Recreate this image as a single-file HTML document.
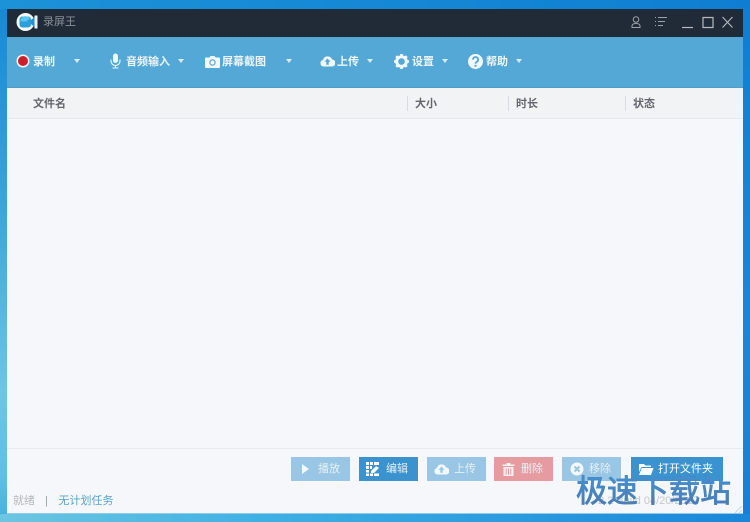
<!DOCTYPE html>
<html><head><meta charset="utf-8">
<style>
*{box-sizing:border-box}
html,body{margin:0;padding:0}
body{width:750px;height:522px;position:relative;overflow:hidden;font-family:"Liberation Sans","Noto Sans CJK SC",sans-serif;background:#2f9fdc}
.bg{position:absolute;left:0;top:0;width:750px;height:522px;background:linear-gradient(180deg,#1488d6 0,#3aa6dc 40%,#6cc6e2 75%,#5cc0e4 92%,#45aee2 100%)}
.bgt{position:absolute;left:0;top:0;width:750px;height:9px;background:linear-gradient(90deg,#1c92d8,#0f7ed2)}
.bgr{position:absolute;left:743px;top:0;width:7px;height:522px;background:linear-gradient(180deg,#0f7ed2,#1a86d8 60%,#1780d6)}
.bgb{position:absolute;left:0;top:514px;width:750px;height:8px;background:linear-gradient(90deg,#6cc6e2,#3fb0e4 35%,#1a86da)}
.win{position:absolute;left:7px;top:9px;width:736px;height:505px;background:#f5f7fa;border-bottom:1px solid #8fcbe6}
.title{position:absolute;left:0;top:0;width:736px;height:28px;background:#212a37}
.tool{position:absolute;left:0;top:28px;width:736px;height:51px;background:#54a8d6;border-bottom:1px solid #4f9cc6}
.head{position:absolute;left:0;top:79px;width:736px;height:31px;background:#f1f3f5;border-bottom:1px solid #e6e8eb}
.t{position:absolute;white-space:nowrap;line-height:14px;font-size:11px}
.tb{color:#eef6fb;font-weight:bold;top:55px}
.hd{color:#63676c;font-weight:bold;top:97px}
.sep{position:absolute;width:1px;height:15px;top:96px;background:#d9dce0}
.arr{position:absolute;top:59px;width:0;height:0;border-left:3px solid transparent;border-right:3px solid transparent;border-top:4px solid #d8ebf6}
.btn{position:absolute;top:457px;height:24px;width:59px;color:#e6f0f7;font-size:11px;line-height:24px}
.btn span{position:absolute;left:27px;top:0;white-space:nowrap}
.btn svg{position:absolute;left:9px;top:5px}
.line{position:absolute;left:7px;top:448px;width:736px;height:1px;background:#e8eaec}
svg{position:absolute;display:block}
</style></head>
<body>
<div class="bg"></div><div class="bgt"></div><div class="bgr"></div><div class="bgb"></div>
<div class="win">
<div class="title"></div><div class="tool"></div><div class="head"></div>
</div>
<div class="line"></div>

<!-- logo -->
<svg style="left:16px;top:12px" width="22" height="20" viewBox="0 0 22 20">
<circle cx="9.500" cy="10" r="9" fill="#f4f9fc"/>
<rect x="3.500" y="4.500" width="11.500" height="11" rx="3" fill="#2b9fd8"/>
<path d="M4.500 8a5 4 0 0 1 9.500-1.500L10 9.500H4.500z" fill="#5cc6ec"/>
<path d="M15 8l3.500-3v10L15 12z" fill="#2a8ccc"/>
<path d="M18.500 3.500H21.500v13h-3z" fill="#e6f3fa"/>
</svg>
<div class="t" style="left:43px;top:15px;color:#8a919a;font-size:11px">录屏王</div>

<!-- window controls -->
<svg style="left:628px;top:14px" width="110" height="17" viewBox="0 0 110 17" fill="none" stroke="#9aa1a9" stroke-width="1">
<circle cx="8" cy="5.500" r="2.800"/>
<path d="M4 13.500v-1.500c0-1.500 1.500-2.500 4-2.500s4 1 4 2.500v1.500z"/>
<path d="M27 3.500h1M30 3.500h9M27 7.500h1M30 7.500h7M27 11.500h1M30 11.500h5"/>
<path d="M54 13.500h11" stroke="#b4bac0" stroke-width="1.200"/>
<path d="M75 3.500h10v10h-10z" stroke="#b4bac0" stroke-width="1.200"/>
<path d="M94.500 3l10 10.500M104.500 3l-10 10.500" stroke="#b4bac0" stroke-width="1.100"/>
</svg>

<!-- toolbar -->
<svg style="left:16px;top:54px" width="14" height="14" viewBox="0 0 14 14"><circle cx="7" cy="7" r="6.500" fill="#f4f8fb"/><circle cx="7" cy="7" r="5" fill="#cd1f2b"/></svg>
<div class="t tb" style="left:33px">录制</div>
<div class="arr" style="left:74px"></div>

<svg style="left:110px;top:53px" width="11" height="16" viewBox="0 0 11 16" fill="#f2f8fc">
<rect x="3" y="0.500" width="5" height="9.500" rx="2.500"/>
<path d="M1 6.500v1.500a4.500 4.500 0 0 0 9 0V6.500" fill="none" stroke="#f2f8fc" stroke-width="1.100"/>
<path d="M5 12h1v2.500h2.500v1h-6v-1H5z"/>
</svg>
<div class="t tb" style="left:126px">音频输入</div>
<div class="arr" style="left:178px"></div>

<svg style="left:205px;top:55px" width="15" height="13" viewBox="0 0 15 13">
<path d="M1 2.500h3.500L5.500 1h4l1 1.500H14a1 1 0 0 1 1 1V12a1 1 0 0 1-1 1H1a1 1 0 0 1-1-1V3.500a1 1 0 0 1 1-1z" fill="#f2f8fc"/>
<circle cx="7.500" cy="7.500" r="3.200" fill="#54a8d6"/><circle cx="7.500" cy="7.500" r="2" fill="#f2f8fc"/>
</svg>
<div class="t tb" style="left:222px">屏幕截图</div>
<div class="arr" style="left:286px"></div>

<svg style="left:320px;top:55px" width="15" height="12" viewBox="0 0 15 12">
<path d="M3.500 11.500a3.300 3.300 0 0 1-.5-6.500 4.700 4.700 0 0 1 9-.500 3.500 3.500 0 0 1 0 7z" fill="#f2f8fc"/>
<path d="M7.500 3.500l3 3.200H8.700v3H6.300v-3H4.500z" fill="#54a8d6"/>
</svg>
<div class="t tb" style="left:337px">上传</div>
<div class="arr" style="left:367px"></div>

<svg style="left:394px;top:54px" width="15" height="15" viewBox="0 0 15 15">
<circle cx="7.500" cy="7.500" r="4.800" fill="none" stroke="#f2f8fc" stroke-width="3"/>
<path d="M7.500 0v15M0 7.500h15M2.200 2.200l10.600 10.600M12.800 2.200L2.200 12.800" stroke="#f2f8fc" stroke-width="2.600" stroke-dasharray="2.400 10.200 2.400 0"/>
</svg>
<div class="t tb" style="left:412px">设置</div>
<div class="arr" style="left:442px"></div>

<svg style="left:468px;top:54px" width="15" height="15" viewBox="0 0 15 15">
<circle cx="7.500" cy="7.500" r="7.500" fill="#f2f8fc"/>
<path d="M4.900 5.600a2.600 2.600 0 1 1 4 2.200c-.9.600-1.400 1-1.400 2" fill="none" stroke="#54a8d6" stroke-width="1.800"/>
<rect x="6.500" y="10.800" width="2" height="2" fill="#54a8d6"/>
</svg>
<div class="t tb" style="left:486px">帮助</div>
<div class="arr" style="left:516px"></div>

<!-- header -->
<div class="t hd" style="left:33px">文件名</div>
<div class="sep" style="left:407px"></div><div class="t hd" style="left:415px">大小</div>
<div class="sep" style="left:508px"></div><div class="t hd" style="left:516px">时长</div>
<div class="sep" style="left:625px"></div><div class="t hd" style="left:633px">状态</div>

<!-- buttons -->
<div class="btn" style="left:291px;background:#98c6e4"><svg width="14" height="14" style="left:9px"><path d="M2 2l7 5-7 5z" fill="#f2f8fc"/></svg><span>播放</span></div>
<div class="btn" style="left:359px;background:#3a93cf"><svg width="14" height="14" viewBox="0 0 14 14" style="left:7px"><path d="M0 0h3v3H0zM4 0h3v3H4zM8 0h5v3H8zM0 4h3v3H0zM4 4h2v3H4zM0 8h3v2.500H0zM0 11.500h3V14H0zM4 11.500h3V14H4zM8 11.500h5V14H8zM5 9l5-5 3 2-5 5H5z" fill="#fff"/></svg><span>编辑</span></div>
<div class="btn" style="left:427px;background:#98c6e4"><svg width="15" height="12" viewBox="0 0 15 12" style="left:7px;top:6px"><path d="M3.500 11.500a3.300 3.300 0 0 1-.5-6.500 4.700 4.700 0 0 1 9-.500 3.500 3.500 0 0 1 0 7z" fill="#f2f8fc"/><path d="M7.500 3.500l3 3.200H8.700v3H6.300v-3H4.500z" fill="#98c6e4"/></svg><span>上传</span></div>
<div class="btn" style="left:494px;background:#e59ba0"><svg width="13" height="14" viewBox="0 0 13 14" style="left:8px"><path d="M4.500 1h4v1.500H12.500V4H.5V2.500h4zM1.500 5h10v9h-10zM3.700 6.500v6h1v-6zM6 6.500v6h1v-6zM8.300 6.500v6h1v-6z" fill="#f8f0f0" fill-rule="evenodd"/></svg><span>删除</span></div>
<div class="btn" style="left:562px;background:#98c6e4"><svg width="14" height="14" viewBox="0 0 14 14" style="left:8px"><circle cx="7" cy="7" r="6.500" fill="#f2f8fc"/><path d="M4.500 4.500l5 5M9.500 4.500l-5 5" stroke="#98c6e4" stroke-width="2"/></svg><span>移除</span></div>
<div class="btn" style="left:631px;width:92px;background:#3a93cf;color:#fff"><svg width="16" height="13" viewBox="0 0 16 13" style="left:7px;top:6px"><path d="M1 1h5l1.500 1.500H13v1.500H3.500L1 9z" fill="#fff"/><path d="M3.800 5H15.500L13 12H1z" fill="#fff"/></svg><span>打开文件夹</span></div>

<!-- status -->
<div class="t" style="left:13px;top:494px;color:#b3b8bd">就绪</div>
<div class="t" style="left:45px;top:494px;color:#9aa1a8">|</div>
<div class="t" style="left:58.500px;top:494px;color:#5aa3cf">无计划任务</div>
<div class="t" style="left:598px;top:494px;color:#c4c8cc">2.2 Build 04/20/2017</div>

<!-- watermark -->
<div class="t" style="left:576px;top:472px;font-size:31px;line-height:40px;font-weight:normal;-webkit-text-stroke:0.700px #4a86c0;background:linear-gradient(180deg,#3f93d4 15%,#5177ab 85%);-webkit-background-clip:text;-webkit-text-fill-color:transparent">极速下载站</div>
<svg style="left:733px;top:504px" width="10" height="10"><path d="M9 2L2 9M9 6L6 9" stroke="#cfd4d9"/></svg>
</body></html>
